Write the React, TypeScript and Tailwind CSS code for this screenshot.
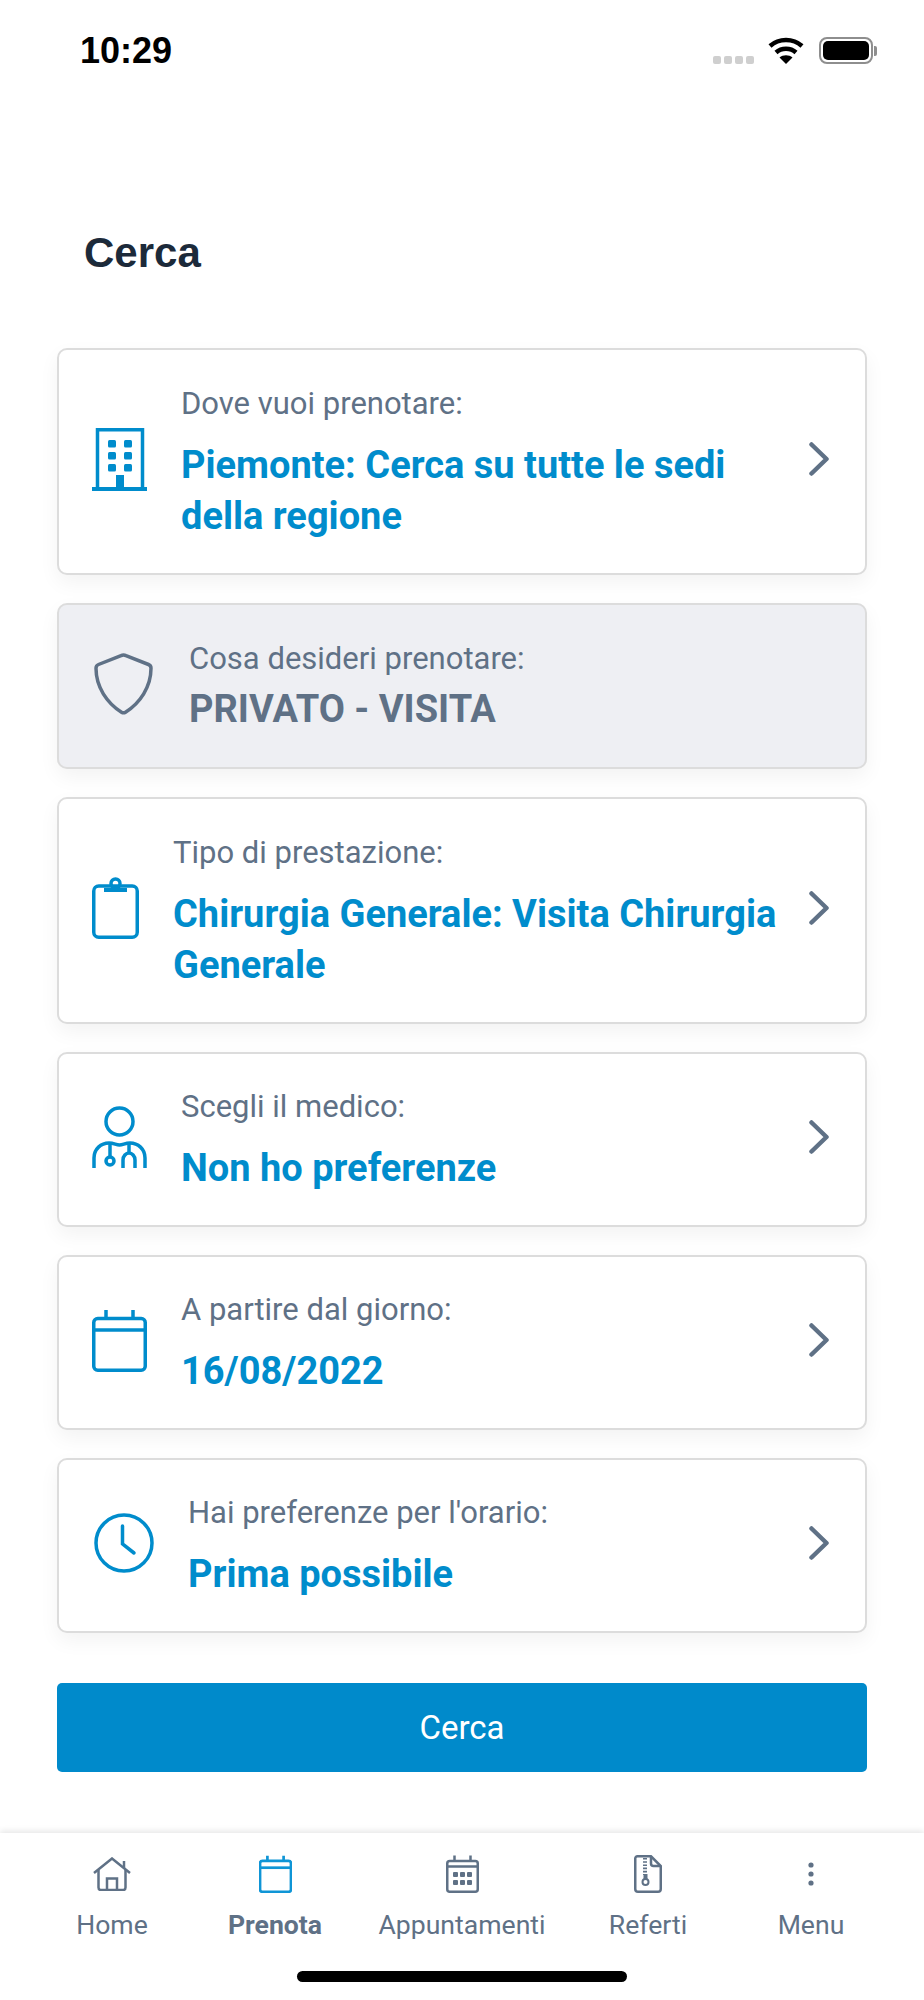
import React from "react";

const BLUE = "#008ccc";
const GREY = "#5f7186";

function BuildingIcon() {
  return (
    <svg width="55" height="63" viewBox="0 0 55 63" fill="none">
      <path d="M5.5 61V1.75H50.5V61" stroke={BLUE} strokeWidth="3.5" />
      <path d="M0 61H55" stroke={BLUE} strokeWidth="4" />
      <rect x="16" y="12" width="8" height="7.5" rx="1.5" fill={BLUE} />
      <rect x="32" y="12" width="8" height="7.5" rx="1.5" fill={BLUE} />
      <rect x="16" y="24" width="8" height="7.5" rx="1.5" fill={BLUE} />
      <rect x="32" y="24" width="8" height="7.5" rx="1.5" fill={BLUE} />
      <rect x="16" y="36" width="8" height="7.5" rx="1.5" fill={BLUE} />
      <rect x="32" y="36" width="8" height="7.5" rx="1.5" fill={BLUE} />
      <rect x="24" y="47" width="8" height="14" fill={BLUE} />
    </svg>
  );
}

function ShieldIcon() {
  return (
    <svg width="59" height="62" viewBox="0 0 59 62" fill="none">
      <path
        d="M27 2.6C28.6 1.8 30.4 1.8 32 2.6L54.5 11.5C56.2 12.2 57 13.5 57 15.3C57 34 46 50 31.5 59.2C30.2 60 28.8 60 27.5 59.2C13 50 2 34 2 15.3C2 13.5 2.8 12.2 4.5 11.5L27 2.6Z"
        stroke={GREY}
        strokeWidth="3.5"
      />
    </svg>
  );
}

function ClipboardIcon() {
  return (
    <svg width="47" height="62" viewBox="0 0 47 62" fill="none">
      <rect x="1.75" y="9" width="43.5" height="51.25" rx="5" stroke={BLUE} strokeWidth="3.5" />
      <circle cx="23.5" cy="6.5" r="4.5" stroke={BLUE} strokeWidth="3.5" />
      <path d="M12 13H35" stroke={BLUE} strokeWidth="4" />
    </svg>
  );
}

function DoctorIcon() {
  return (
    <svg width="55" height="63" viewBox="0 0 55 63" fill="none" stroke={BLUE} strokeWidth="3.5">
      <circle cx="27.5" cy="15.5" r="13.5" />
      <path d="M2 62V52C2 43 9 37 17 37C22 37 24 39 27.5 39C31 39 33 37 38 37C46 37 53 43 53 52V62" />
      <path d="M18 38V50" />
      <circle cx="18" cy="55" r="4" />
      <path d="M37 38V46" />
      <path d="M31 62V54C31 50 34 47 37 47C40 47 43 50 43 54V62" />
    </svg>
  );
}

function CalendarIcon({ color = BLUE, w = 55, h = 63, sw = 3.5 }: { color?: string; w?: number; h?: number; sw?: number }) {
  return (
    <svg width={w} height={h} viewBox="0 0 55 63" fill="none" stroke={color} strokeWidth={sw}>
      <rect x="1.75" y="9.5" width="51.5" height="51.75" rx="4" />
      <path d="M2 21H53" />
      <path d="M14 1V9M41 1V9" />
    </svg>
  );
}

function ClockIcon() {
  return (
    <svg width="60" height="60" viewBox="0 0 60 60" fill="none" stroke={BLUE} strokeWidth="3.5" strokeLinecap="round">
      <circle cx="30" cy="30" r="28" />
      <path d="M28.5 13V31L40 40" />
    </svg>
  );
}

function Chevron() {
  return (
    <svg className="mb-[5px]" width="20" height="34" viewBox="0 0 20 34" fill="none" stroke={GREY} strokeWidth="4.5" strokeLinecap="round" strokeLinejoin="round">
      <path d="M2.5 2.5L17.5 17L2.5 31.5" />
    </svg>
  );
}

function HomeIcon() {
  return (
    <svg width="38" height="34" viewBox="0 0 38 34" fill="none" stroke={GREY} strokeWidth="2.5">
      <path d="M1 16L19 1.5L37 16" />
      <path d="M5.5 13V30.5C5.5 32 6.5 33 8 33H30C31.5 33 32.5 32 32.5 30.5V13" />
      <path d="M14 33V21.5H24V33" />
      <path d="M31 4V11" />
    </svg>
  );
}

function AgendaIcon() {
  return (
    <svg width="33" height="38" viewBox="0 0 33 38" fill="none" stroke={GREY} strokeWidth="2.5">
      <rect x="1.25" y="6" width="30.5" height="30.75" rx="2.5" />
      <path d="M2 11.5H31M8.5 0.5V6M24.5 0.5V6" />
      <g fill={GREY} stroke="none">
        <rect x="7" y="17" width="5" height="5" rx="1" />
        <rect x="14" y="17" width="5" height="5" rx="1" />
        <rect x="21" y="17" width="5" height="5" rx="1" />
        <rect x="7" y="25" width="5" height="5" rx="1" />
        <rect x="14" y="25" width="5" height="5" rx="1" />
        <rect x="21" y="25" width="5" height="5" rx="1" />
      </g>
    </svg>
  );
}

function ReportIcon() {
  return (
    <svg width="28" height="38" viewBox="0 0 28 38" fill="none" stroke={GREY} strokeWidth="2.5">
      <path d="M3.5 1.25H17L26.75 11V34C26.75 35.6 25.6 36.75 24 36.75H4C2.4 36.75 1.25 35.6 1.25 34V3.5C1.25 2.2 2.2 1.25 3.5 1.25Z" />
      <path d="M17 1.5V8.5C17 10 18 11 19.5 11H26.5" />
      <path d="M11 3V20" strokeWidth="4" strokeDasharray="1.6 1.6" />
      <circle cx="11.5" cy="27" r="3" strokeWidth="2" />
      <path d="M11.5 19V24" strokeWidth="4" />
    </svg>
  );
}

function DotsIcon() {
  return (
    <svg width="8" height="26" viewBox="0 0 8 26" fill={GREY}>
      <circle cx="4" cy="4" r="2.6" />
      <circle cx="4" cy="13" r="2.6" />
      <circle cx="4" cy="22" r="2.6" />
    </svg>
  );
}

function Card({
  icon,
  label,
  value,
  className,
  iconBox,
}: {
  icon: React.ReactNode;
  label: string;
  value: React.ReactNode;
  className: string;
  iconBox: string;
}) {
  return (
    <div className={`mb-[28px] flex items-center rounded-[10px] border-2 border-[#dcdcdc] bg-white pl-[33px] pr-[36px] shadow-[0_8px_20px_rgba(0,0,0,0.05)] ${className}`}>
      <div className={`flex shrink-0 pb-[5px] ${iconBox}`}>{icon}</div>
      <div className="min-w-0 flex-1 pt-[4px]">
        <div className="text-[31px] leading-[36px] text-[#5f7186]">{label}</div>
        <div className="mt-[18px] text-[38px] font-bold leading-[51px] text-[#008ccc]">{value}</div>
      </div>
      <Chevron />
    </div>
  );
}

function NavItem({ icon, label, bold }: { icon: React.ReactNode; label: string; bold?: boolean }) {
  return (
    <div className="flex flex-col items-center">
      <div className="flex h-[38px] items-center">{icon}</div>
      <div className={`mt-[17px] whitespace-nowrap text-[26.6px] leading-[30px] text-[#5f7186] ${bold ? "font-bold" : ""}`}>{label}</div>
    </div>
  );
}

export default function App() {
  return (
    <div className="relative flex h-[2000px] w-[924px] flex-col overflow-hidden bg-white font-['Roboto',sans-serif]">
      {/* status bar */}
      <div className="flex h-[100px] items-start justify-between pl-[80px] pr-[47px] pt-[31px]">
        <span className="font-['Liberation_Sans',sans-serif] text-[36px] font-bold leading-[40px] text-black">10:29</span>
        <div className="flex items-center pt-[6px]">
          <div className="mt-[18px] flex gap-[3px]">
            <span className="h-[8px] w-[8px] rounded-[2px] bg-[#cfcfcf]" />
            <span className="h-[8px] w-[8px] rounded-[2px] bg-[#cfcfcf]" />
            <span className="h-[8px] w-[8px] rounded-[2px] bg-[#cfcfcf]" />
            <span className="h-[8px] w-[8px] rounded-[2px] bg-[#cfcfcf]" />
          </div>
          <svg className="ml-[14px]" width="36" height="27" viewBox="0 0 36 27" fill="none" stroke="#000" strokeWidth="4.5">
            <path d="M2 9C11 1 25 1 34 9" />
            <path d="M8 15.5C13.5 10.5 22.5 10.5 28 15.5" />
            <path d="M18 27L11.5 20.5C15 17.5 21 17.5 24.5 20.5L18 27Z" fill="#000" stroke="none" />
          </svg>
          <div className="ml-[15px] flex items-center">
            <div className="h-[27px] w-[54px] rounded-[8px] border-2 border-[#8e8e8e] p-[2px]">
              <div className="h-full w-full rounded-[5px] bg-black" />
            </div>
            <div className="ml-[1px] h-[10px] w-[3px] rounded-r-[2px] bg-[#8e8e8e]" />
          </div>
        </div>
      </div>

      <h1 className="ml-[84px] mt-[128px] font-['Liberation_Sans',sans-serif] text-[42px] font-bold leading-[50px] text-[#1c2a3a]">Cerca</h1>

      <div className="mx-[57px] mt-[70px]">
        <Card
          className="h-[227px]"
          iconBox="w-[55px] mr-[34px]"
          icon={<BuildingIcon />}
          label="Dove vuoi prenotare:"
          value={<>Piemonte: Cerca su tutte le sedi della regione</>}
        />
        <div className="mb-[28px] flex h-[166px] items-center rounded-[10px] border-2 border-[#dcdcdc] bg-[#eeeff3] pl-[35px] shadow-[0_8px_20px_rgba(0,0,0,0.05)]">
          <div className="mr-[36px] flex shrink-0 pb-[5px]">
            <ShieldIcon />
          </div>
          <div className="pt-[4px]">
            <div className="text-[31px] leading-[36px] text-[#5f7186]">Cosa desideri prenotare:</div>
            <div className="mt-[7px] text-[38px] font-bold leading-[51px] text-[#5f7186]">PRIVATO - VISITA</div>
          </div>
        </div>
        <Card
          className="h-[227px]"
          iconBox="w-[47px] mr-[34px]"
          icon={<ClipboardIcon />}
          label="Tipo di prestazione:"
          value={<>Chirurgia Generale: Visita Chirurgia Generale</>}
        />
        <Card className="h-[175px]" iconBox="w-[55px] mr-[34px]" icon={<DoctorIcon />} label="Scegli il medico:" value="Non ho preferenze" />
        <Card className="h-[175px]" iconBox="w-[55px] mr-[34px]" icon={<CalendarIcon />} label="A partire dal giorno:" value="16/08/2022" />
        <Card className="h-[175px]" iconBox="w-[60px] ml-[2px] mr-[34px]" icon={<ClockIcon />} label="Hai preferenze per l'orario:" value="Prima possibile" />
        <button className="mt-[50px] flex h-[89px] w-full items-center justify-center rounded-[5px] bg-[#008acb] text-[33px] text-white">Cerca</button>
      </div>

      {/* bottom tab bar */}
      <nav className="absolute bottom-0 left-0 h-[167px] w-full bg-white pt-[22px] shadow-[0_-2px_6px_rgba(0,0,0,0.1)]">
        <div className="grid grid-cols-[224px_102px_272px_100px_226px]">
          <NavItem icon={<HomeIcon />} label="Home" />
          <NavItem icon={<CalendarIcon color="#0f95d6" w={33} h={38} sw={4.5} />} label="Prenota" bold />
          <NavItem icon={<AgendaIcon />} label="Appuntamenti" />
          <NavItem icon={<ReportIcon />} label="Referti" />
          <NavItem icon={<DotsIcon />} label="Menu" />
        </div>
        <div className="absolute bottom-[18px] left-[297px] h-[11px] w-[330px] rounded-full bg-black" />
      </nav>
    </div>
  );
}
